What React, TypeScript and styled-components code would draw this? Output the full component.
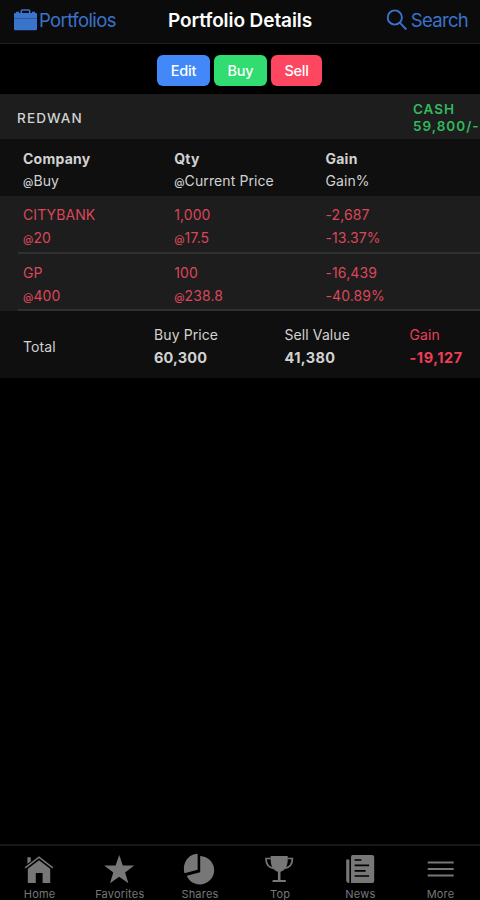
import React from 'react';
import styled, { createGlobalStyle } from 'styled-components';

const GlobalStyle = createGlobalStyle`
  * { box-sizing: border-box; }
  html, body { margin: 0; background: #000; }
  body { font-family: Inter, "Liberation Sans", sans-serif; overflow: hidden; }
`;

const RED = '#dc465a';

const Screen = styled.div`
  width: 480px;
  height: 900px;
  display: flex;
  flex-direction: column;
  background: #000;
  color: #d2d2d2;
  overflow: hidden;
`;

const NavBar = styled.header`
  height: 44px;
  flex: none;
  display: grid;
  grid-template-columns: 1fr auto 1fr;
  align-items: center;
  padding: 0 12px 4px;
  background: #0b0b0b;
  border-bottom: 1px solid #202020;
`;

const NavLink = styled.a<{ $end?: boolean }>`
  display: flex;
  align-items: center;
  justify-content: ${(p) => (p.$end ? 'flex-end' : 'flex-start')};
  gap: ${(p) => (p.$end ? 4 : 2)}px;
  padding-left: ${(p) => (p.$end ? 0 : 2)}px;
  color: #3973cb;
  font-size: 18.5px;
  letter-spacing: ${(p) => (p.$end ? -0.7 : -0.6)}px;
  line-height: 24px;
  white-space: nowrap;
`;

const Title = styled.h1`
  margin: 0;
  padding-top: 2px;
  color: #fff;
  font-size: 19px;
  font-weight: 600;
  letter-spacing: -0.08px;
  line-height: 24px;
  white-space: nowrap;
`;

const Actions = styled.div`
  height: 50px;
  flex: none;
  display: flex;
  justify-content: center;
  align-items: flex-start;
  gap: 4px;
  padding: 11px 1px 0 0;
`;

const ActionButton = styled.button<{ $bg: string; $w: number }>`
  width: ${(p) => p.$w}px;
  height: 31px;
  padding: 0;
  border: 0;
  border-radius: 6px;
  background: ${(p) => p.$bg};
  color: #fff;
  font: 500 14.5px/31px Inter, sans-serif;
  letter-spacing: -0.25px;
`;

const SectionHeader = styled.div`
  height: 45px;
  flex: none;
  display: flex;
  align-items: center;
  justify-content: space-between;
  padding: 3px 0 0 17px;
  background: #1d1d1d;
  font-size: 13.5px;
  font-weight: 500;
  letter-spacing: 1.15px;
  line-height: 17px;
`;

const Cash = styled.div`
  width: 67px;
  color: #30b95d;
  font-weight: 600;
  letter-spacing: 1px;
  white-space: nowrap;
`;

const Row = styled.div<{ $h: number; $bg: string; $color?: string }>`
  height: ${(p) => p.$h}px;
  flex: none;
  display: grid;
  grid-template-columns: 151.2px 151.3px 1fr;
  padding: 8.5px 0 0 23px;
  background: ${(p) => p.$bg};
  color: ${(p) => p.$color ?? '#d2d2d2'};
`;

const Holding = styled(Row)`
  padding-top: 8px;
  background: linear-gradient(#303030, #303030) 18px 100% / 100% 2px no-repeat ${(p) => p.$bg};
`;

const Totals = styled(Row)`
  grid-template-columns: 131px 130.5px 125px 1fr;
  padding-top: 13px;
`;

const Cell = styled.div<{ $color?: string; $middle?: boolean }>`
  display: flex;
  flex-direction: column;
  padding-top: ${(p) => (p.$middle ? 12 : 0)}px;
  color: ${(p) => p.$color ?? 'inherit'};
`;

const Line = styled.span<{ $bold?: boolean }>`
  height: 22.7px;
  font-size: 14px;
  font-weight: ${(p) => (p.$bold ? 700 : 400)};
  letter-spacing: ${(p) => (p.$bold ? 0.25 : 0.1)}px;
  line-height: 22.7px;
  white-space: nowrap;
`;

const Amount = styled(Line)<{ $track: number }>`
  font-size: 14.5px;
  letter-spacing: ${(p) => p.$track}px;
`;

const At = styled.small`
  font-size: 10.5px;
  font-weight: 500;
`;

const TabBar = styled.nav`
  height: 56px;
  flex: none;
  margin-top: auto;
  display: grid;
  grid-template-columns: repeat(6, 80.2px);
  margin-left: -0.5px;
  border-top: 2px solid #171717;
  color: #777;
`;

const Tab = styled.a`
  display: flex;
  flex-direction: column;
  align-items: center;
  padding-top: 8px;
  font-size: 11px;
  letter-spacing: 0.2px;
  line-height: 14px;

  svg { flex: none; margin-bottom: 1px; }
`;

const icons: Record<string, React.ReactNode> = {
  Home: (
    <>
      <path d="M4.2 2.2h3.4v4L4.2 8.8z" />
      <path d="M2 12.8 15.8 2.2 29.6 12.8" fill="none" stroke="currentColor" strokeWidth="1.6" />
      <path d="M4.6 13.8 15.8 5.2 27 13.8V28h-7.6V18h-6.8v10H4.6z" />
    </>
  ),
  Favorites: <path d="m16 0 3.6 10.6H31l-9.1 7 3.3 10.6L16 21.8l-9.2 6.4 3.3-10.6-9.1-7h11.4z" />,
  Shares: (
    <>
      <path d="M14.4-1.2v15.9L1.2 18.2C-1.2 8 5-.8 14.4-1.2z" />
      <path d="M17 1c8 .6 14 6.3 14 14.2 0 8-6.6 14.2-14.4 14.2-5.8 0-10.7-3-13-8.6L17 17.2z" />
    </>
  ),
  Top: (
    <>
      <path d="M7.5 1h17v4c0 7-3.2 10.5-7.2 11.8V25H22.6v2H9.4v-2h5.3v-8.2C10.7 15.5 7.5 12 7.5 5z" />
      <path d="M8 3.5H2.8c0 5.5 2.6 9 7.7 9.8M24 3.5h5.2c0 5.5-2.6 9-7.7 9.8" fill="none" stroke="currentColor" strokeWidth="1.7" />
    </>
  ),
  News: (
    <>
      <path d="M9.5 0H29a2 2 0 0 1 2 2v24a2 2 0 0 1-2 2H7.8V2q0-2 1.7-2z" />
      <path d="M3 4.5h3.2V28H6a3 3 0 0 1-3-3z" />
      <path d="M11.4 5h6.8M11.4 10.3h14.5M11.4 15.8h11M11.4 21h14.5" stroke="#000" strokeWidth="1.7" />
    </>
  ),
  More: <path d="M3.5 7.5h26M3.5 14h26M3.5 20.5h26" stroke="currentColor" strokeWidth="2" />,
};

const withAt = (text: string) =>
  text.startsWith('@') ? (
    <>
      <At>@</At>
      {text.slice(1)}
    </>
  ) : (
    text
  );

const holdings = [
  { height: 58, cells: [['CITYBANK', '@20'], ['1,000', '@17.5'], ['-2,687', '-13.37%']] },
  { height: 57, cells: [['GP', '@400'], ['100', '@238.8'], ['-16,439', '-40.89%']] },
];

const headings = [['Company', '@Buy'], ['Qty', '@Current Price'], ['Gain', 'Gain%']];

const totals = [
  { label: 'Buy Price', value: '60,300', track: 0.15 },
  { label: 'Sell Value', value: '41,380', track: 0.4 },
  { label: 'Gain', value: '-19,127', track: 0.55, color: '#ed3e59' },
];

export default function App() {
  return (
    <Screen>
      <GlobalStyle />
      <NavBar>
        <NavLink>
          <svg width="23" height="22" viewBox="0 0 23 22" fill="currentColor">
            <path d="M7.3 4V2Q7.3 1 8.3 1h6.4q1 0 1 1v2" fill="none" stroke="currentColor" strokeWidth="1.5" />
            <path d="M2 4V2.8h3V4h13V2.8h3V4h1q1 0 1 1v4.2H0V5q0-1 1-1zM0 9.5h23v10.8q0 1-1 1H1q-1 0-1-1z" />
          </svg>
          Portfolios
        </NavLink>
        <Title>Portfolio Details</Title>
        <NavLink $end>
          <svg width="21" height="22" viewBox="0 0 21 22" fill="none" stroke="currentColor" strokeWidth="1.9">
            <circle cx="8.8" cy="8.5" r="7.1" />
            <path d="m13.8 13.7 6.5 6.8" />
          </svg>
          Search
        </NavLink>
      </NavBar>

      <Actions>
        <ActionButton $bg="#4388f9" $w={53}>Edit</ActionButton>
        <ActionButton $bg="#31dc70" $w={53}>Buy</ActionButton>
        <ActionButton $bg="#fd4660" $w={51}>Sell</ActionButton>
      </Actions>

      <SectionHeader>
        <span>REDWAN</span>
        <Cash>CASH<br />59,800/-</Cash>
      </SectionHeader>

      <Row $h={57} $bg="#0f0f0f">
        {headings.map(([top, bottom]) => (
          <Cell key={top}>
            <Line $bold>{top}</Line>
            <Line>{withAt(bottom)}</Line>
          </Cell>
        ))}
      </Row>

      {holdings.map(({ height, cells }) => (
        <Holding key={cells[0][0]} $h={height} $bg="#1d1d1d" $color={RED}>
          {cells.map(([top, bottom]) => (
            <Cell key={top}>
              <Line>{top}</Line>
              <Line>{withAt(bottom)}</Line>
            </Cell>
          ))}
        </Holding>
      ))}

      <Totals $h={67} $bg="#0f0f0f">
        <Cell $middle><Line>Total</Line></Cell>
        {totals.map(({ label, value, color, track }) => (
          <Cell key={label} $color={color}>
            <Line>{label}</Line>
            <Amount $bold $track={track}>{value}</Amount>
          </Cell>
        ))}
      </Totals>

      <TabBar>
        {Object.entries(icons).map(([label, art]) => (
          <Tab key={label}>
            <svg width="32" height="32" viewBox="0.8 -1 32 32" fill="currentColor" overflow="visible">{art}</svg>
            {label}
          </Tab>
        ))}
      </TabBar>
    </Screen>
  );
}
